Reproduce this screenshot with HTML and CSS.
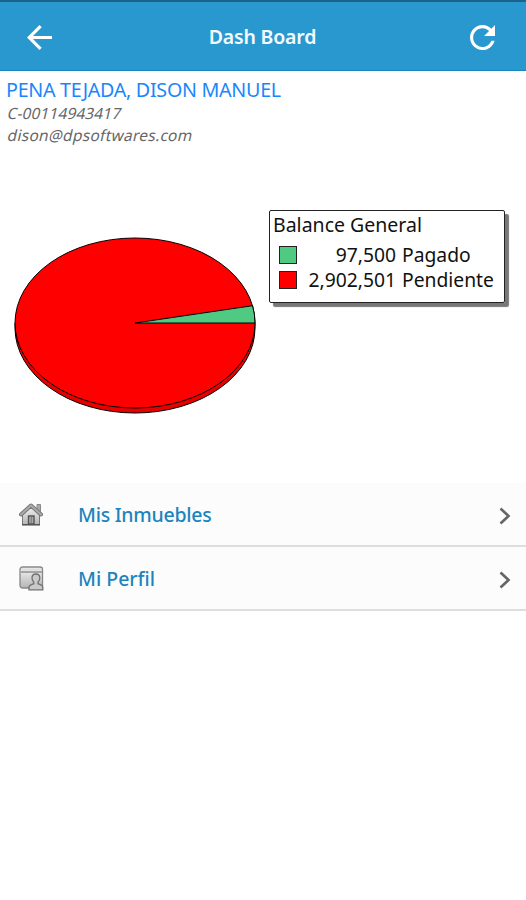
FILE: index.html
```html
<!DOCTYPE html>
<html lang="es">
<head>
  <meta charset="UTF-8" />
  <meta name="viewport" content="width=device-width, initial-scale=1.0"/>
  <title>Dash Board</title>
  <link rel="stylesheet" href="styles.css">
</head>
<body>

  <header class="header">
    <svg class="header-icon" viewBox="4 4 16 16">
      <path d="M20 11H7.830l5.590-5.590L12 4l-8 8 8 8 1.410-1.410L7.830 13H20v-2z" fill="#fff"/>
    </svg>
    <h1>Dash Board</h1>
    <svg class="header-icon" viewBox="4 4 16 16">
      <path d="M17.650 6.350C16.200 4.900 14.210 4 12 4c-4.420 0-7.990 3.580-7.990 8s3.570 8 7.990 8c3.730 0 6.840-2.550 7.730-6h-2.080c-.820 2.330-3.040 4-5.650 4-3.310 0-6-2.690-6-6s2.690-6 6-6c1.660 0 3.140.690 4.220 1.780L13 11h7V4l-2.350 2.350z" fill="#fff"/>
    </svg>
  </header>

  <section class="user">
    <h2>PENA TEJADA, DISON MANUEL</h2>
    <p class="code">C-00114943417</p>
    <p class="email">dison@dpsoftwares.com</p>
  </section>

  <section class="chart">
    <svg class="pie" width="244" height="180" viewBox="0 0 244 180">
      <g stroke="#000" stroke-width="1">
        <path d="M2 86V91A120 85 0 0 0 242 91V86" fill="#e60000"/>
        <ellipse cx="122" cy="86" rx="120" ry="85" fill="#f00"/>
        <path d="M122 86L239.500 68.700A120 85 0 0 1 242 86Z" fill="#50c982"/>
      </g>
    </svg>
    <div class="legend">
      <h3>Balance General</h3>
      <div class="legend-row">
        <span class="swatch green"></span>
        <span class="amount">97,500</span>
        <span>Pagado</span>
      </div>
      <div class="legend-row">
        <span class="swatch red"></span>
        <span class="amount">2,902,501</span>
        <span>Pendiente</span>
      </div>
    </div>
  </section>

  <nav class="menu">
    <a class="menu-item">
      <svg class="menu-icon" viewBox="0 0 26 26">
        <defs>
          <linearGradient id="gray" x1="0" y1="0" x2="0" y2="1">
            <stop offset="0" stop-color="#f4f4f4"/>
            <stop offset="1" stop-color="#b5b5b5"/>
          </linearGradient>
        </defs>
        <path d="M19 3.500h3.500v7H19z" fill="#aaa" stroke="#888"/>
        <path d="M4.500 12L13 5l8.500 7v11.500h-17z" fill="url(#gray)" stroke="#777"/>
        <path d="M3 13.500L13 4.500l10 9" fill="none" stroke="#777" stroke-width="4" stroke-linecap="round" stroke-linejoin="round"/>
        <path d="M3 13.500L13 4.500l10 9" fill="none" stroke="#aaa" stroke-width="2" stroke-linecap="round"/>
        <path d="M10.500 23v-8h5.500v8z" fill="#aaa" stroke="#555" stroke-width="1.400"/>
        <path d="M13.300 15v8" stroke="#777"/>
        <path d="M4 23.800h18" stroke="#555" stroke-width="1.500"/>
      </svg>
      <span class="label">Mis Inmuebles</span>
      <svg class="chevron" viewBox="0 0 12 18">
        <path d="M1.500 1.500L9.500 9L1.500 16.500" fill="none" stroke="#666" stroke-width="2.600"/>
      </svg>
    </a>
    <a class="menu-item">
      <svg class="menu-icon" viewBox="0 0 26 26">
        <rect x="2" y="2" width="22.500" height="21" rx="2.500" fill="url(#gray)" stroke="#888" stroke-width="1.300"/>
        <path d="M3 7h21" stroke="#888" stroke-width="1.400"/>
        <path d="M3.500 4.500h20" stroke="#ddd" stroke-width="2"/>
        <path d="M11 24.800v-2.500q0-2 3-3l1.800-.6v-1.400q-1.800-2-1.800-4.300 0-4 3.900-4t3.900 4q0 2.300-1.800 4.300v1.400l1.800.6q3 1 3 3v2.500z" fill="#c9c9c9" stroke="#707070" stroke-width="1.300"/>
      </svg>
      <span class="label profile">Mi Perfil</span>
      <svg class="chevron" viewBox="0 0 12 18">
        <path d="M1.500 1.500L9.500 9L1.500 16.500" fill="none" stroke="#666" stroke-width="2.600"/>
      </svg>
    </a>
  </nav>

</body>
</html>
```
FILE: styles.css
```css
body {
  font-family: 'Noto Sans', sans-serif;
  background-color: #fff;
  margin: 0;
}

h1, h2, h3, p {
  margin: 0;
  font-weight: 400;
  white-space: nowrap;
}

.header {
  box-sizing: border-box;
  height: 71px;
  padding: 2px 31px 0 27px;
  display: flex;
  align-items: center;
  justify-content: space-between;
  background: #2998ce;
  border-top: 2px solid #1c6388;
  border-bottom: 1px solid #1487c2;
}

.header-icon {
  width: 25px;
  height: 25px;
}

.header h1 {
  margin-left: 3px;
  padding-bottom: 2px;
  font-size: 19.5px;
  font-weight: 600;
  letter-spacing: -0.2px;
  color: #f4fbff;
}

.user {
  box-sizing: border-box;
  height: 139px;
  padding: 8px 7px 0;
}

.user h2 {
  margin-left: -1px;
  margin-bottom: 1px;
  font-size: 19.7px;
  line-height: 22px;
  letter-spacing: -0.28px;
  color: #1a86fb;
}

.user p {
  margin-left: 1px;
  font-size: 15.5px;
  line-height: 22px;
  color: #666;
  transform: skewX(-13deg);
}

.user .code {
  letter-spacing: 0.1px;
}

.user .email {
  letter-spacing: 0.27px;
}

.chart {
  height: 273px;
  display: flex;
  align-items: flex-start;
}

.pie {
  margin: 27px 12px 0 13px;
}

.legend {
  box-sizing: border-box;
  width: 236px;
  height: 93px;
  padding: 2px 3px;
  border: 1px solid #222;
  border-radius: 2px;
  box-shadow: 4px 4px 1px #777;
  color: #111;
}

.legend h3 {
  font-size: 19.5px;
  line-height: 24px;
  margin-bottom: 5px;
}

.legend-row {
  display: flex;
  align-items: center;
  height: 25px;
  padding-left: 6px;
  font-size: 19.3px;
}

.swatch {
  box-sizing: border-box;
  width: 18px;
  height: 18px;
  border: 1px solid #222;
}

.green {
  background: #50c982;
}

.red {
  background: #f00;
}

.amount {
  width: 99px;
  margin-right: 6px;
  text-align: right;
}

.menu-item {
  box-sizing: border-box;
  height: 64px;
  padding: 0 15px 0 18px;
  display: flex;
  align-items: center;
  background: #fcfcfc;
  border-bottom: 2px solid #dedede;
}

.menu-icon {
  width: 26px;
  height: 26px;
}

.label {
  flex: 1;
  margin-left: 34px;
  font-size: 19.5px;
  font-weight: 500;
  letter-spacing: -0.25px;
  color: #1c84bd;
}

.profile {
  letter-spacing: 0;
}

.chevron {
  width: 12px;
  height: 18px;
  margin-top: 4px;
}
```
